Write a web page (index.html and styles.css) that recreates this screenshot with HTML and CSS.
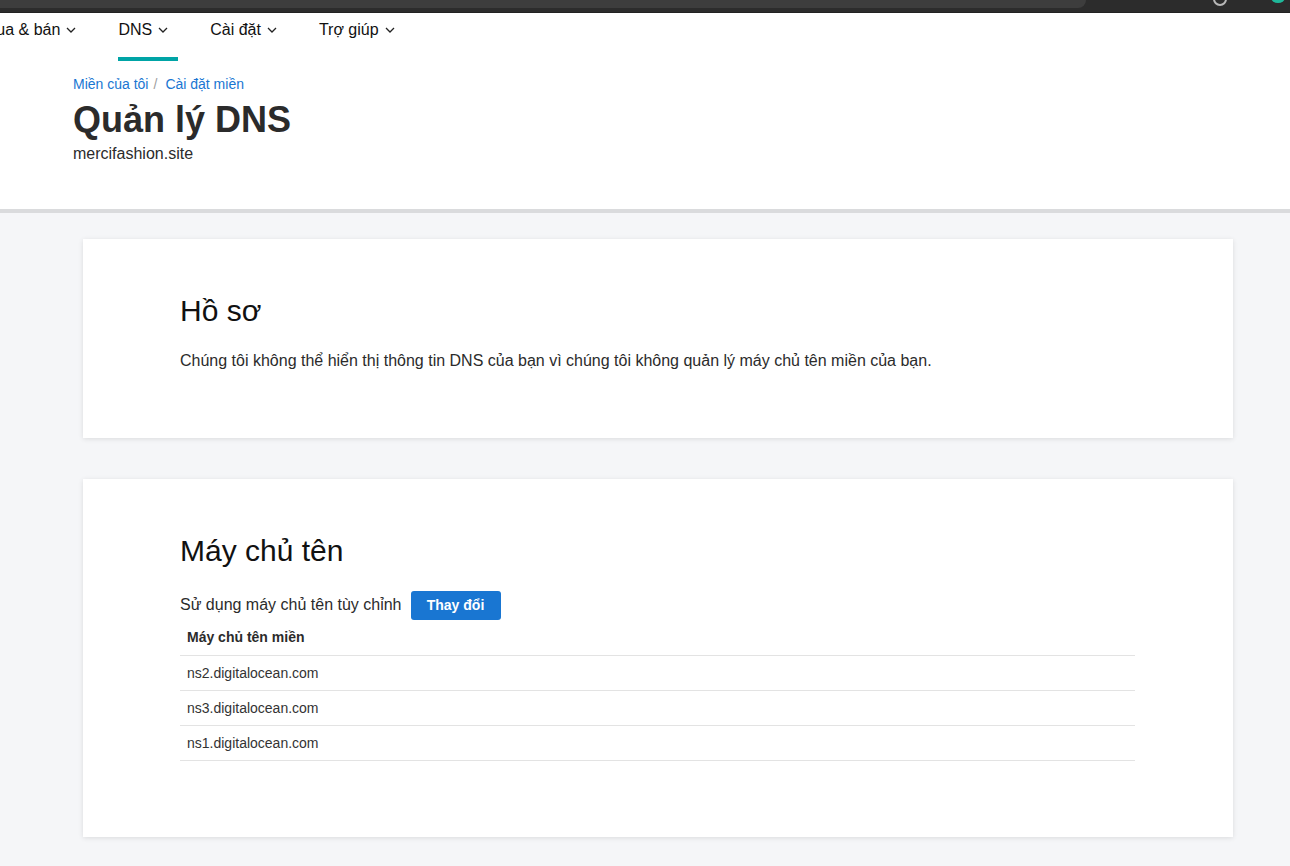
FILE: index.html
```html
<!DOCTYPE html>
<html lang="vi">
<head>
<meta charset="utf-8">
<title>Quản lý DNS</title>
<link rel="stylesheet" href="styles.css">
</head>
<body>
<div class="chrome">
  <div class="chrome-bar"></div>
  <span class="chrome-icon ring"></span>
  <span class="chrome-icon dot"></span>
</div>
<header class="header">
  <nav class="nav">
    <a class="nav-item">Mua &amp; bán<svg class="chev" viewBox="0 0 10 6"><path d="M1 1l4 4 4-4" /></svg></a>
    <a class="nav-item active">DNS<svg class="chev" viewBox="0 0 10 6"><path d="M1 1l4 4 4-4" /></svg></a>
    <a class="nav-item">Cài đặt<svg class="chev" viewBox="0 0 10 6"><path d="M1 1l4 4 4-4" /></svg></a>
    <a class="nav-item">Trợ giúp<svg class="chev" viewBox="0 0 10 6"><path d="M1 1l4 4 4-4" /></svg></a>
  </nav>
  <div class="page-head">
    <div class="crumbs"><a>Miền của tôi</a><span class="sep">/</span><a>Cài đặt miền</a></div>
    <h1 class="title">Quản lý DNS</h1>
    <div class="subtitle">mercifashion.site</div>
  </div>
</header>
<main class="main">
  <section class="card card-profile">
    <h2 class="card-title">Hồ sơ</h2>
    <p class="card-text">Chúng tôi không thể hiển thị thông tin DNS của bạn vì chúng tôi không quản lý máy chủ tên miền của bạn.</p>
  </section>
  <section class="card card-ns">
    <h2 class="card-title">Máy chủ tên</h2>
    <div class="ns-line"><span>Sử dụng máy chủ tên tùy chỉnh</span><button class="btn">Thay đổi</button></div>
    <table class="ns-table">
      <thead><tr><th>Máy chủ tên miền</th></tr></thead>
      <tbody>
        <tr><td>ns2.digitalocean.com</td></tr>
        <tr><td>ns3.digitalocean.com</td></tr>
        <tr><td>ns1.digitalocean.com</td></tr>
      </tbody>
    </table>
  </section>
</main>
</body>
</html>
```
FILE: styles.css
```css
* { box-sizing: border-box; }
html, body { margin: 0; padding: 0; }
body {
  font-family: "Liberation Sans", Arial, sans-serif;
  color: #2b2b2b;
  background: #f5f6f8;
  overflow: hidden;
}
.chrome {
  position: relative;
  height: 13px;
  background: #2c2c2c;
  border-bottom: 1px solid #222;
}
.chrome-bar {
  height: 8px;
  width: 1086px;
  background: #3d3d3d;
  border-bottom-right-radius: 8px;
}
.chrome-icon { position: absolute; }
.chrome-icon.ring {
  left: 1213px; top: -8px; width: 14px; height: 14px;
  border: 2px solid #b8b8b8; border-radius: 50%;
}
.chrome-icon.dot {
  left: 1271px; top: -8px; width: 14px; height: 11px;
  background: #1fb89a; border-radius: 50%;
}
.header {
  background: #fff;
  border-bottom: 4px solid #dadbdd;
  height: 200px;
}
.nav {
  display: flex;
  height: 48px;
  margin-left: -17px;
}
.nav-item {
  display: flex;
  align-items: flex-start;
  gap: 6px;
  font-size: 16px;
  line-height: 18px;
  color: #111;
  padding: 8px 10px 0 0;
  margin-right: 32px;
  border-bottom: 4px solid transparent;
  cursor: pointer;
}
.nav-item.active { border-bottom-color: #00a4a6; }
.chev { width: 10px; height: 6px; margin-top: 6px; fill: none; stroke: #222; stroke-width: 1.3; }
.page-head { padding: 13px 0 0 73px; }
.crumbs { font-size: 14px; line-height: 20px; }
.crumbs a { color: #1976d2; }
.crumbs .sep { color: #a0a0a0; margin: 0 8px 0 5px; }
.title {
  margin: 4px 0 0;
  font-size: 36px;
  line-height: 44px;
  font-weight: 700;
  color: #2b2b2b;
}
.subtitle { font-size: 16px; line-height: 20px; margin-top: 2px; }
.main {
  padding: 26px 57px 30px 83px;
  display: flex;
  flex-direction: column;
  gap: 41px;
}
.card {
  background: #fff;
  box-shadow: 0 1px 5px rgba(0, 0, 0, 0.11);
  padding: 54px 98px 0 97px;
}
.card-profile { height: 199px; }
.card-ns { height: 358px; }
.card-title {
  margin: 0;
  font-size: 30px;
  line-height: 36px;
  font-weight: 400;
  color: #111;
}
.card-text { margin: 20px 0 0; font-size: 16px; line-height: 24px; }
.ns-line {
  margin-top: 21px;
  display: flex;
  align-items: center;
  gap: 9px;
  font-size: 16px;
  height: 30px;
}
.btn {
  font-family: inherit;
  font-size: 14px;
  font-weight: 700;
  color: #fff;
  background: #1976d2;
  border: 0;
  border-radius: 3px;
  width: 90px;
  height: 29px;
  padding: 0;
}
.ns-table { width: 100%; border-collapse: collapse; font-size: 14px; }
.ns-table th, .ns-table td {
  text-align: left;
  height: 35px;
  padding: 0 7px;
  border-bottom: 1px solid #e3e3e3;
}
.ns-table th { font-weight: 700; color: #2b2b2b; }
.ns-table td { color: #333; }
```
